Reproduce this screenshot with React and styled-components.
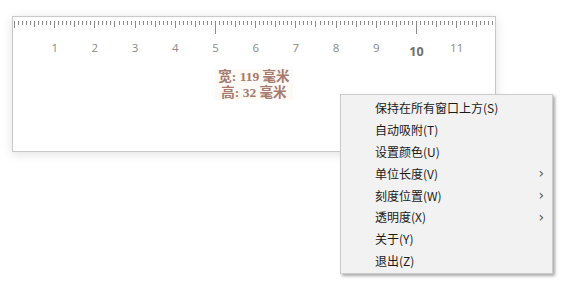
import React from 'react';
import { styled, createGlobalStyle } from 'styled-components';

const GlobalStyle = createGlobalStyle`
  html, body {
    margin: 0;
    padding: 0;
    background: #ffffff;
  }
  body {
    font-family: "Noto Sans CJK SC", "Noto Sans", sans-serif;
  }
`;

const Page = styled.div`
  position: relative;
  width: 562px;
  height: 300px;
  overflow: hidden;
  padding: 16px 0 0 12px;
  box-sizing: border-box;
`;

const Ruler = styled.div`
  width: 484px;
  height: 136px;
  box-sizing: border-box;
  background: #ffffff;
  border: 1px solid #c9c9c9;
  box-shadow: 0 2px 10px rgba(0, 0, 0, 0.12);
  display: flex;
  flex-direction: column;
`;

const Ticks = styled.svg`
  display: block;
  flex: none;
`;

const Numbers = styled.div`
  position: relative;
  height: 20px;
  margin-top: 5px;
`;

const Num = styled.span`
  position: absolute;
  top: ${p => (p.$big ? '3px' : '0')};
  transform: translateX(-50%);
  font-family: "Open Sans", "DejaVu Sans", sans-serif;
  font-size: ${p => (p.$big ? '12.5px' : '11.5px')};
  font-weight: ${p => (p.$big ? 700 : 400)};
  color: ${p => (p.$big ? '#6e6e6e' : '#8a8a8a')};
`;

const Measure = styled.div`
  align-self: center;
  margin-top: 9px;
  padding: 0 3px;
  background: #fdf9f5;
  text-align: center;
  font-family: "Liberation Serif", "Noto Sans CJK SC", serif;
  font-weight: 700;
  font-size: 13.5px;
  line-height: 15.5px;
  color: #a57a6f;
`;

const Menu = styled.div`
  position: absolute;
  left: 340px;
  top: 94px;
  width: 213px;
  box-sizing: border-box;
  padding: 2px 0;
  background: #f2f2f2;
  border: 1px solid #cccccc;
  box-shadow: 2px 2px 3px rgba(0, 0, 0, 0.35);
`;

const Item = styled.div`
  display: flex;
  align-items: center;
  justify-content: space-between;
  height: 21.8px;
  padding: 0 8px 0 34px;
  font-size: 12px;
  color: #1a1a1a;
`;

const Arrow = styled.span`
  font-family: "DejaVu Sans", sans-serif;
  font-size: 14px;
  line-height: 1;
  color: #555;
`;

const MM = 4.02;
const X0 = 1;

const TickMarks = () => {
  const lines = [];
  for (let i = 0; i <= 120; i++) {
    const x = Math.round(X0 + i * MM) + 0.5;
    let len = 4;
    if (i % 50 === 0 && i > 0) len = 13;
    else if (i % 10 === 0) len = 7;
    else if (i % 5 === 0) len = 6;
    lines.push(<line key={i} x1={x} y1={4} x2={x} y2={4 + len} stroke="#8a8a8a" strokeWidth="1" />);
  }
  return (
    <Ticks width="482" height="18">
      {lines}
    </Ticks>
  );
};

const items = [
  { label: '保持在所有窗口上方(S)' },
  { label: '自动吸附(T)' },
  { label: '设置颜色(U)' },
  { label: '单位长度(V)', sub: true },
  { label: '刻度位置(W)', sub: true },
  { label: '透明度(X)', sub: true },
  { label: '关于(Y)' },
  { label: '退出(Z)' },
];

const App = () => {
  return (
    <Page>
      <GlobalStyle />
      <Ruler>
        <TickMarks />
        <Numbers>
          {Array.from({ length: 11 }, (_, k) => k + 1).map(n => (
            <Num key={n} $big={n === 10} style={{ left: X0 + n * 10 * MM + 0.5 }}>{n}</Num>
          ))}
        </Numbers>
        <Measure>
          <div>宽: 119 毫米</div>
          <div>高: 32 毫米</div>
        </Measure>
      </Ruler>
      <Menu>
        {items.map(it => (
          <Item key={it.label}>
            <span>{it.label}</span>
            {it.sub && <Arrow>›</Arrow>}
          </Item>
        ))}
      </Menu>
    </Page>
  );
};

export default App;
